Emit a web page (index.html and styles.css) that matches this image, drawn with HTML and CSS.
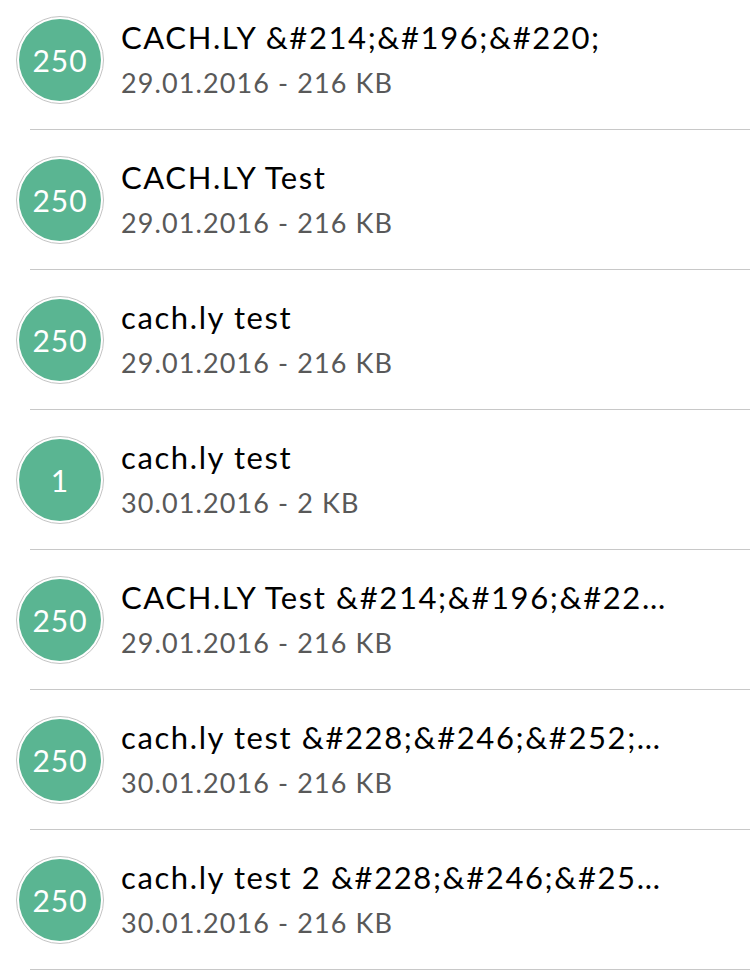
FILE: index.html
```html
<!DOCTYPE html>
<html>
<head>
<meta charset="utf-8">
<link rel="stylesheet" href="styles.css">
</head>
<body>
<ul class="list">
  <li class="row"><div class="badge"><span class="badge-inner">250</span></div><div class="info"><div class="title">CACH.LY &amp;#214;&amp;#196;&amp;#220;</div><div class="meta">29.01.2016 - 216 KB</div></div></li>
  <li class="row"><div class="badge"><span class="badge-inner">250</span></div><div class="info"><div class="title">CACH.LY Test</div><div class="meta">29.01.2016 - 216 KB</div></div></li>
  <li class="row"><div class="badge"><span class="badge-inner">250</span></div><div class="info"><div class="title">cach.ly test</div><div class="meta">29.01.2016 - 216 KB</div></div></li>
  <li class="row"><div class="badge"><span class="badge-inner">1</span></div><div class="info"><div class="title">cach.ly test</div><div class="meta">30.01.2016 - 2 KB</div></div></li>
  <li class="row"><div class="badge"><span class="badge-inner">250</span></div><div class="info"><div class="title">CACH.LY Test &amp;#214;&amp;#196;&amp;#22…</div><div class="meta">29.01.2016 - 216 KB</div></div></li>
  <li class="row"><div class="badge"><span class="badge-inner">250</span></div><div class="info"><div class="title">cach.ly test &amp;#228;&amp;#246;&amp;#252;…</div><div class="meta">30.01.2016 - 216 KB</div></div></li>
  <li class="row"><div class="badge"><span class="badge-inner">250</span></div><div class="info"><div class="title">cach.ly test 2 &amp;#228;&amp;#246;&amp;#25…</div><div class="meta">30.01.2016 - 216 KB</div></div></li>
</ul>
</body>
</html>
```
FILE: styles.css
```css
html, body {
  margin: 0;
  padding: 0;
  background: #ffffff;
  overflow: hidden;
}
body {
  font-family: Lato, "Noto Sans", sans-serif;
}
.list {
  list-style: none;
  margin: -10px 0 0 0;
  padding: 0;
}
.row {
  box-sizing: border-box;
  height: 140px;
  margin-left: 30px;
  border-bottom: 1px solid #c8c8c8;
  display: flex;
  align-items: center;
}
.badge {
  box-sizing: border-box;
  width: 88px;
  height: 88px;
  margin-left: -14px;
  border: 1px solid #c4c4c4;
  border-radius: 50%;
  padding: 2px;
  background: #ffffff;
  flex: none;
}
.badge-inner {
  width: 100%;
  height: 100%;
  border-radius: 50%;
  background: #5ab592;
  color: #ffffff;
  display: flex;
  align-items: center;
  justify-content: center;
  font-size: 30px;
  font-weight: 400;
  letter-spacing: 1px;
}
.info {
  margin-left: 17px;
  min-width: 0;
  flex: 1;
}
.title {
  font-size: 31px;
  line-height: 40px;
  letter-spacing: 1.6px;
  color: #000000;
  white-space: nowrap;
  overflow: hidden;
}
.meta {
  margin-top: 6px;
  font-size: 27px;
  line-height: 40px;
  letter-spacing: 1.1px;
  color: #595959;
  white-space: nowrap;
}
```
